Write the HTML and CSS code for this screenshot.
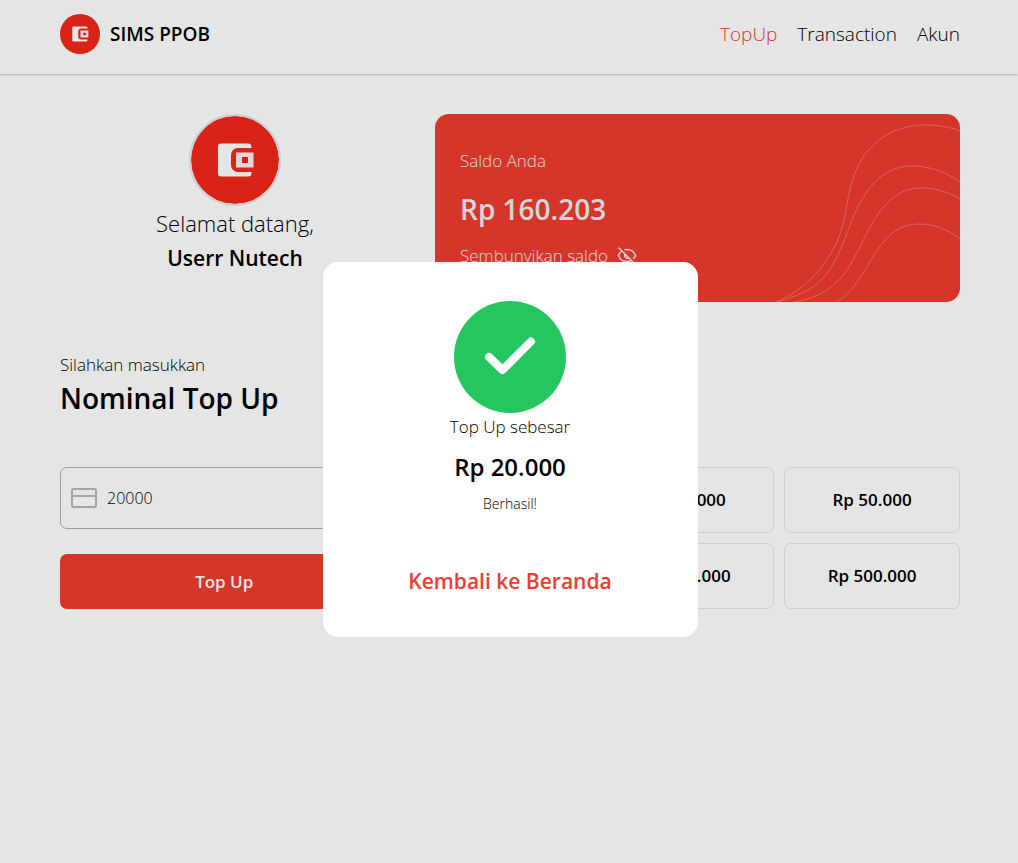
FILE: index.html
```html
<!DOCTYPE html>
<html lang="id">
<head>
<meta charset="utf-8">
<meta name="viewport" content="width=device-width, initial-scale=1">
<title>SIMS PPOB - Top Up</title>
<link rel="stylesheet" href="styles.css">
</head>
<body>
<svg class="sprite" aria-hidden="true">
  <symbol id="wallet" viewBox="0 0 88 88">
    <circle cx="44" cy="44" r="44" fill="#f3281a"/>
    <path d="M30 27.500H57a3.500 3.500 0 0 1 3.500 3.500v1H47a7 7 0 0 0-7 7v10a7 7 0 0 0 7 7h13.500v1a3.500 3.500 0 0 1-3.500 3.500H30a3 3 0 0 1-3-3V30.500a3 3 0 0 1 3-3z" fill="#fff"/>
    <path fill-rule="evenodd" d="M45 36.500h17.500v15H45zM51 41v6h6v-6z" fill="#fff" opacity=".93"/>
  </symbol>
</svg>
<header class="header">
  <a class="brand" href="#"><svg class="brand-logo" aria-hidden="true"><use href="#wallet"/></svg>SIMS PPOB</a>
  <nav class="nav">
    <a class="nav-link nav-link-active" href="#">TopUp</a>
    <a class="nav-link" href="#">Transaction</a>
    <a class="nav-link" href="#">Akun</a>
  </nav>
</header>
<main class="main">
  <section class="overview">
    <div class="profile">
      <svg class="avatar" aria-hidden="true"><use href="#wallet"/></svg>
      <p class="greeting">Selamat datang,</p>
      <p class="username">Userr Nutech</p>
    </div>
    <div class="balance">
      <svg class="waves" viewBox="0 0 200 188" aria-hidden="true" fill="none" stroke="#fff" stroke-opacity=".27">
        <path d="M16 188C42 178 64 155 77 128C88 102 86 80 95 59C105 32 130 11 165 11C178 11 190 13 200 17"/>
        <path d="M18 188C45 179 62 173 77 143C89 119 92 98 107 78C120 59 135 52 153 52C170 52 185 58 200 68"/>
        <path d="M33 188C62 184 80 170 93 146C105 125 111 106 127 89C139 77 150 74 163 74C177 74 190 79 200 85"/>
        <path d="M77 188C95 176 102 160 113 143C126 122 138 110 160 110C176 110 190 117 200 125"/>
      </svg>
      <p class="balance-label">Saldo Anda</p>
      <p class="balance-amount">Rp 160.203</p>
      <button class="balance-toggle" type="button">Sembunyikan saldo
        <svg class="eye" viewBox="0 0 20 18" aria-hidden="true" fill="none" stroke="currentColor" stroke-width="1.400" stroke-linecap="round">
          <path d="M2 1l16 16M5 4C3 5.300 2 7 1.500 8.500c1.200 3.500 4.500 6 8.500 6 1.600 0 3-.4 4.300-1.100M8 2.700C13 1.700 17 4.500 18.500 8.500c-.4 1.200-1 2.200-1.900 3M8 7a3 3 0 0 0 4 4"/>
        </svg>
      </button>
    </div>
  </section>
  <section class="topup">
    <p class="topup-hint">Silahkan masukkan</p>
    <h1 class="topup-title">Nominal Top Up</h1>
    <div class="topup-grid">
      <form class="topup-form">
        <label class="field">
          <svg class="card-icon" viewBox="0 0 26 20" aria-hidden="true" fill="none" stroke="currentColor" stroke-width="2"><rect x="1" y="1" width="24" height="18" rx="1.500"/><path d="M1 8h24"/></svg>
          <input class="field-input" type="text" value="20000" aria-label="Nominal Top Up">
        </label>
        <button class="submit" type="button">Top Up</button>
      </form>
      <div class="presets">
        <button class="preset" type="button">Rp 10.000</button>
        <button class="preset" type="button">Rp 20.000</button>
        <button class="preset" type="button">Rp 50.000</button>
        <button class="preset" type="button">Rp 100.000</button>
        <button class="preset" type="button">Rp 250.000</button>
        <button class="preset" type="button">Rp 500.000</button>
      </div>
    </div>
  </section>
</main>
<div class="overlay">
  <div class="modal" role="dialog" aria-modal="true" aria-labelledby="modal-amount">
    <svg class="success" viewBox="0 0 112 112" aria-hidden="true"><circle cx="56" cy="56" r="56" fill="#25c660"/><path d="M35 56L48.500 69L77 40.500" fill="none" stroke="#fff" stroke-width="8" stroke-linecap="round" stroke-linejoin="round"/></svg>
    <p class="modal-label">Top Up sebesar</p>
    <p class="modal-amount" id="modal-amount">Rp 20.000</p>
    <p class="modal-status">Berhasil!</p>
    <a class="modal-link" href="#">Kembali ke Beranda</a>
  </div>
</div>
</body>
</html>
```
FILE: styles.css
```css
* { box-sizing: border-box; margin: 0; }
body {
  min-height: 100vh;
  background: #fff;
  color: #000;
  font-family: "Open Sans", "Noto Sans", sans-serif;
  font-size: 16px;
  line-height: 24px;
  font-weight: 350;
}
a { color: inherit; text-decoration: none; }
button, input { font: inherit; color: inherit; background: none; border: 0; padding: 0; }
button { cursor: pointer; }
.sprite { display: none; }

.header {
  display: flex;
  align-items: center;
  justify-content: space-between;
  height: 74px;
  padding: 0 58px 6px 60px;
  box-shadow: 0 1px 2px rgba(0, 0, 0, .25);
}
.brand { display: flex; align-items: center; gap: 10px; font-size: 19px; font-weight: 600; }
.brand-logo { width: 40px; height: 40px; }
.nav { display: flex; gap: 20px; font-size: 19px; }
.nav-link-active { color: #ef3b2e; }

.main { padding: 40px 58px 40px 60px; }
.overview { display: grid; grid-template-columns: 2fr 3fr; gap: 25px; }
.profile { display: flex; flex-direction: column; align-items: center; }
.avatar { width: 92px; height: 92px; border: 2px solid #e5e7eb; border-radius: 50%; }
.greeting { font-size: 22px; line-height: 35px; }
.username { font-size: 21px; line-height: 35px; font-weight: 600; }

.balance {
  position: relative;
  display: flex;
  flex-direction: column;
  align-items: flex-start;
  height: 188px;
  padding: 35px 25px;
  overflow: hidden;
  border-radius: 14px;
  background: #ef3b2e;
  color: #eee;
}
.waves { position: absolute; right: 0; bottom: 0; width: 200px; height: 188px; }
.balance-label { font-size: 17px; }
.balance-amount { margin: 16px 0 15px; font-size: 28px; line-height: 40px; font-weight: 600; }
.balance-toggle { display: flex; align-items: center; gap: 9px; font-size: 17px; line-height: 24px; }
.eye { width: 20px; height: 18px; }

.topup { margin-top: 51px; }
.topup-hint { font-size: 17px; }
.topup-title { font-size: 28px; line-height: 42px; font-weight: 600; }
.topup-grid { display: grid; grid-template-columns: 3fr 5fr; gap: 24px; margin-top: 48px; }
.topup-form { display: flex; flex-direction: column; gap: 25px; }
.field {
  display: flex;
  align-items: center;
  gap: 10px;
  height: 62px;
  padding: 0 10px;
  border: 1px solid #b0b0b0;
  border-radius: 7px;
}
.card-icon { flex: none; width: 26px; height: 20px; color: #b9b9b9; }
.field-input { flex: 1; min-width: 0; outline: 0; }
.submit { height: 55px; border-radius: 7px; background: #ef3b2e; color: #fff; font-size: 17px; font-weight: 600; }
.presets { display: grid; grid-template-columns: repeat(3, 1fr); gap: 10px; align-content: start; }
.preset { height: 66px; border: 1px solid #e5e7eb; border-radius: 7px; font-size: 17px; font-weight: 600; }

.overlay {
  position: fixed;
  inset: 0;
  display: flex;
  align-items: center;
  justify-content: center;
  padding: 36px 0 0 2px;
  background: rgba(0, 0, 0, .1);
}
.modal {
  display: flex;
  flex-direction: column;
  align-items: center;
  width: 375px;
  padding: 39px 20px 40px;
  border-radius: 15px;
  background: #fff;
}
.success { width: 112px; height: 112px; }
.modal-label { font-size: 17px; line-height: 27px; }
.modal-amount { margin: 8px 0; font-size: 24px; line-height: 38px; font-weight: 600; }
.modal-status { font-size: 14px; line-height: 20px; }
.modal-link { margin-top: 51px; color: #f13b2f; font-size: 21px; line-height: 32px; font-weight: 600; }
```
